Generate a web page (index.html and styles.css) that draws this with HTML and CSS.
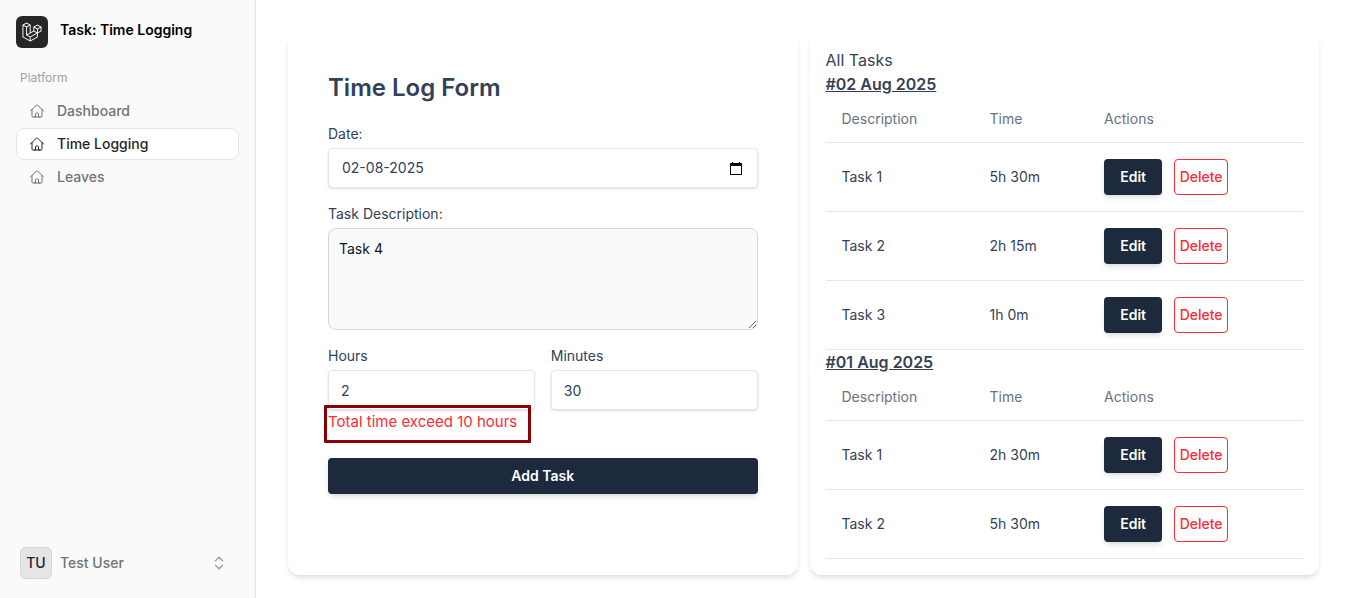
FILE: index.html
```html
<!DOCTYPE html>
<html lang="en">
<head>
<meta charset="utf-8">
<meta name="viewport" content="width=device-width, initial-scale=1">
<title>Task: Time Logging</title>
<link rel="stylesheet" href="styles.css">
</head>
<body>
<svg class="sprite" aria-hidden="true">
  <symbol id="home" viewBox="0 0 24 24"><path d="m2.25 12 8.954-8.955c.44-.439 1.152-.439 1.591 0L21.75 12M4.5 9.75v10.125c0 .621.504 1.125 1.125 1.125H9.75v-4.875c0-.621.504-1.125 1.125-1.125h2.25c.621 0 1.125.504 1.125 1.125V21h4.125c.621 0 1.125-.504 1.125-1.125V9.75M8.25 21h8.25" fill="none" stroke="currentColor" stroke-width="1.5" stroke-linecap="round" stroke-linejoin="round"/></symbol>
</svg>
<div class="layout">
  <aside class="sidebar">
    <a class="brand" href="#">
      <span class="brand-logo"><svg viewBox="0 0 40 42" width="20" height="20" aria-hidden="true"><path fill="currentColor" fill-rule="evenodd" clip-rule="evenodd" d="M17.2 5.633 8.6.855 0 5.633v26.51l16.2 9 16.2-9v-8.442l7.6-4.223V9.856l-8.6-4.777-8.6 4.777V18.3l-5.6 3.111V5.633ZM38 18.301l-5.6 3.11v-6.157l5.6-3.11V18.3Zm-1.06-7.856-5.54 3.078-5.54-3.079 5.54-3.078 5.54 3.079ZM24.8 18.3v-6.157l5.6 3.111v6.158L24.8 18.3Zm-1 1.732 5.54 3.078-13.14 7.302-5.54-3.078 13.14-7.3v-.002Zm-16.2 7.89 7.6 4.222V38.3L2 30.966V7.92l5.6 3.111v16.892ZM8.6 9.3 3.06 6.222 8.6 3.143l5.54 3.08L8.6 9.3Zm21.8 15.51-13.2 7.334V38.3l13.2-7.334v-6.156ZM9.6 11.034l5.6-3.11v14.6l-5.6 3.11v-14.6Z"/></svg></span>
      <span class="brand-name">Task: Time Logging</span>
    </a>
    <nav class="nav" aria-label="Platform">
      <div class="nav-title">Platform</div>
      <a class="nav-item" href="#"><svg class="nav-icon"><use href="#home"/></svg>Dashboard</a>
      <a class="nav-item nav-item-active" href="#" aria-current="page"><svg class="nav-icon"><use href="#home"/></svg>Time Logging</a>
      <a class="nav-item" href="#"><svg class="nav-icon"><use href="#home"/></svg>Leaves</a>
    </nav>
    <button class="profile" type="button">
      <span class="avatar">TU</span>
      <span class="profile-name">Test User</span>
      <svg class="profile-chevrons" viewBox="0 0 16 16" aria-hidden="true"><path d="M4.5 5.75 8 2.25l3.5 3.5M4.5 10.25l3.5 3.5 3.5-3.5" fill="none" stroke="currentColor" stroke-width="1.5" stroke-linecap="round" stroke-linejoin="round"/></svg>
    </button>
  </aside>
  <main class="main">
    <section class="card form-card">
      <h1 class="form-title">Time Log Form</h1>
      <form class="form">
        <div class="field">
          <label for="date">Date:</label>
          <div class="date-box">
            <input class="date-input" id="date" type="text" value="02-08-2025">
            <button class="date-button" type="button" aria-label="Open calendar"><svg viewBox="0 0 12 13" width="12" height="13"><path fill="currentColor" fill-rule="evenodd" d="M2 0h1v1h6V0h1v1h1.500L12 1.500V12.500L11.500 13H.5L0 12.500V1.500L.5 1H2ZM1 4v8h10V4Z"/></svg></button>
          </div>
        </div>
        <div class="field">
          <label for="description">Task Description:</label>
          <textarea class="textarea" id="description">Task 4</textarea>
        </div>
        <div class="time-row">
          <div class="field">
            <label for="hours">Hours</label>
            <input class="input" id="hours" type="text" inputmode="numeric" value="2" aria-describedby="error">
            <div class="error" id="error">Total time exceed 10 hours</div>
          </div>
          <div class="field">
            <label for="minutes">Minutes</label>
            <input class="input" id="minutes" type="text" inputmode="numeric" value="30">
          </div>
        </div>
        <button class="btn btn-primary btn-block" type="submit">Add Task</button>
      </form>
    </section>
    <section class="card tasks-card">
      <div>All Tasks</div>
      <h2 class="day">#02 Aug 2025</h2>
      <table class="tasks">
        <thead><tr><th class="col-description">Description</th><th class="col-time">Time</th><th>Actions</th></tr></thead>
        <tbody>
          <tr><td>Task 1</td><td>5h 30m</td><td><div class="actions"><button class="btn btn-primary" type="button">Edit</button><button class="btn btn-danger" type="button">Delete</button></div></td></tr>
          <tr><td>Task 2</td><td>2h 15m</td><td><div class="actions"><button class="btn btn-primary" type="button">Edit</button><button class="btn btn-danger" type="button">Delete</button></div></td></tr>
          <tr><td>Task 3</td><td>1h 0m</td><td><div class="actions"><button class="btn btn-primary" type="button">Edit</button><button class="btn btn-danger" type="button">Delete</button></div></td></tr>
        </tbody>
      </table>
      <h2 class="day">#01 Aug 2025</h2>
      <table class="tasks">
        <thead><tr><th class="col-description">Description</th><th class="col-time">Time</th><th>Actions</th></tr></thead>
        <tbody>
          <tr><td>Task 1</td><td>2h 30m</td><td><div class="actions"><button class="btn btn-primary" type="button">Edit</button><button class="btn btn-danger" type="button">Delete</button></div></td></tr>
          <tr><td>Task 2</td><td>5h 30m</td><td><div class="actions"><button class="btn btn-primary" type="button">Edit</button><button class="btn btn-danger" type="button">Delete</button></div></td></tr>
        </tbody>
      </table>
    </section>
  </main>
</div>
</body>
</html>
```
FILE: styles.css
```css
*, *::before, *::after { box-sizing: border-box; }
body {
  margin: 0;
  font: 400 16px/24px Inter, "Liberation Sans", sans-serif;
  color: #314158;
  background: #fff;
}
button, input, textarea { font: inherit; color: inherit; margin: 0; }
button { cursor: pointer; }
a { color: inherit; text-decoration: none; }
.sprite { display: none; }

.layout { display: grid; grid-template-columns: 256px 1fr; min-height: 100vh; }

.sidebar {
  display: flex;
  flex-direction: column;
  padding: 16px 16px 15px;
  background: #fafafa;
  border-right: 1px solid #e4e4e7;
  font-size: 14px;
  line-height: 20px;
}
.brand { display: flex; gap: 12px; height: 32px; color: #000; font-weight: 600; }
.brand-logo {
  display: flex;
  align-items: center;
  justify-content: center;
  width: 32px;
  height: 32px;
  border-radius: 6px;
  background: #262626;
  color: #fff;
}
.brand-name { padding-top: 4px; }
.nav { display: flex; flex-direction: column; gap: 1px; margin-top: 20px; }
.nav-title { padding: 1px 4px 7px; font-size: 12px; line-height: 18px; color: #a1a1a1; }
.nav-item {
  display: flex;
  align-items: center;
  gap: 12px;
  height: 32px;
  padding: 0 12px;
  border: 1px solid transparent;
  border-radius: 8px;
  font-weight: 500;
  color: #737373;
}
.nav-item-active { background: #fff; border-color: #e5e5e5; color: #262626; }
.nav-icon { width: 16px; height: 16px; }
.profile {
  display: flex;
  align-items: center;
  gap: 8px;
  margin-top: auto;
  padding: 4px;
  border: 0;
  background: none;
  font-weight: 500;
  color: #737373;
}
.avatar {
  display: flex;
  align-items: center;
  justify-content: center;
  width: 32px;
  height: 32px;
  border: 1px solid #d4d4d4;
  border-radius: 6px;
  background: #e5e5e5;
  color: #262626;
}
.profile-chevrons { width: 16px; height: 16px; margin: 0 8px 0 auto; color: #a1a1a1; }

.main {
  display: grid;
  grid-template-columns: 1fr 1fr;
  gap: 12px;
  align-items: stretch;
  align-content: start;
  padding: 32px 30px 23px 32px;
}
.card {
  border-radius: 12px;
  background: #fff;
  box-shadow: 0 4px 6px -1px rgb(0 0 0 / 10%), 0 2px 4px -2px rgb(0 0 0 / 10%);
}
.form-card { padding: 40px; }
.tasks-card { padding: 16px; color: #364153; }

.form-title { margin: 0 0 20px; font-size: 24px; line-height: 32px; font-weight: 600; }
.form { display: flex; flex-direction: column; gap: 16px; font-size: 14px; line-height: 20px; }
.field { display: flex; flex-direction: column; }
.field label { margin-bottom: 4px; }
.input, .date-box {
  width: 100%;
  height: 40px;
  padding: 8px 12px;
  border: 1px solid #e2e8f0;
  border-radius: 4px;
  background: #fff;
  box-shadow: 0 1px 3px rgb(0 0 0 / 10%), 0 1px 2px -1px rgb(0 0 0 / 10%);
}
.date-box { display: flex; align-items: center; padding: 0 15px 0 13px; }
.date-input { flex: 1; min-width: 0; padding: 0; border: 0; outline: 0; background: none; }
.date-button { display: flex; padding: 0; border: 0; background: none; color: #000; }
.textarea {
  height: 102px;
  padding: 10px;
  border: 1px solid #d1d5dc;
  border-radius: 8px;
  background: #f9fafb;
  color: #101828;
  resize: vertical;
}
.time-row { display: grid; grid-template-columns: 1fr 1fr; gap: 16px; margin-bottom: 8px; }
.error {
  position: relative;
  font-size: 15px;
  line-height: 24px;
  color: #fb2c36;
}
/* highlight frame around the message */
.error::after {
  content: "";
  position: absolute;
  inset: -5px 4px -9px -4px;
  border: 3px solid #8b0000;
  border-radius: 1px;
}

.btn {
  height: 36px;
  border: 1px solid transparent;
  border-radius: 4px;
  font-size: 14px;
  line-height: 20px;
  white-space: nowrap;
}
.btn-primary {
  min-width: 58px;
  padding: 0 14px;
  background: #1d293d;
  color: #fff;
  font-weight: 600;
  box-shadow: 0 4px 6px -1px rgb(0 0 0 / 10%), 0 2px 4px -2px rgb(0 0 0 / 10%);
}
.btn-block { width: 100%; }
.btn-danger { min-width: 54px; padding: 0 4px; border-color: #fb2c36; background: #fff; color: #fb2c36; font-weight: 500; }

.day { margin: 0; font-size: 16px; line-height: 24px; font-weight: 600; text-decoration: underline; }
.tasks {
  width: 100%;
  table-layout: fixed;
  border-collapse: separate;
  border-spacing: 0;
  font-size: 14px;
  line-height: 20px;
}
.tasks th, .tasks td { text-align: left; border-bottom: 1px solid #e5e7eb; }
.tasks th { padding: 13px 16px; font-weight: 400; color: #6a7282; }
.tasks td { padding: 16px; }
.col-description { width: 31%; }
.col-time { width: 24%; }
.actions { display: flex; gap: 12px; }
```
